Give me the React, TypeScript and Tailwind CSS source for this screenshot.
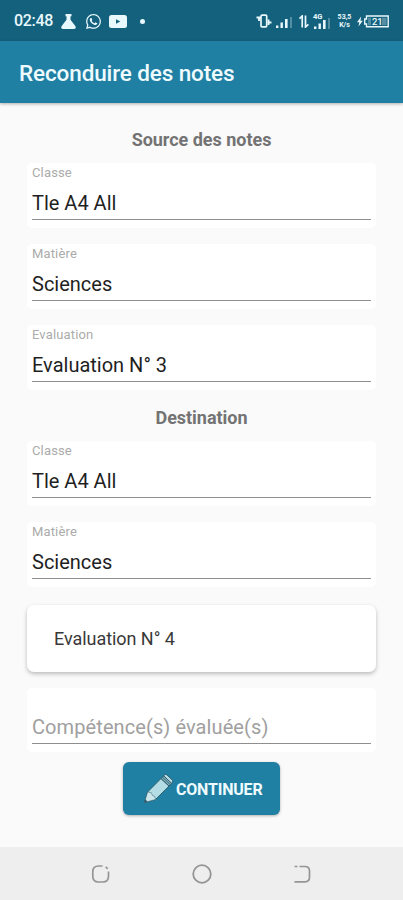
import type { ReactNode } from 'react'
import { FaWhatsapp } from 'react-icons/fa'

const sourceFields = [
  { label: 'Classe', value: 'Tle A4 All' },
  { label: 'Matière', value: 'Sciences' },
  { label: 'Evaluation', value: 'Evaluation N° 3' },
]

const destinationFields = [
  { label: 'Classe', value: 'Tle A4 All' },
  { label: 'Matière', value: 'Sciences' },
]

function FlaskIcon() {
  return (
    <svg width="15" height="15" viewBox="0 0 15 15" fill="currentColor" className="ml-[7px]">
      <path d="M4.500 0h6v2.200h-1v3.600l4.800 6.100c1 1.300.4 3.100-1.200 3.100H1.900C.3 15-.3 13.200.7 11.900l4.800-6.100V2.200h-1z" />
    </svg>
  )
}

function YoutubeIcon() {
  return (
    <svg width="18" height="13" viewBox="0 0 18 13" className="ml-[7px]">
      <rect width="18" height="13" rx="2.500" fill="currentColor" />
      <path d="M7 4.200l4.300 2.300L7 8.800z" fill="#14617d" />
    </svg>
  )
}

function VibrateIcon() {
  return (
    <svg width="16" height="14" viewBox="0 0 16 14" fill="none" stroke="currentColor">
      <rect x="5" y="1.200" width="5.700" height="11.600" rx="1" strokeWidth="1.700" />
      <path d="M.5 3.500h4.500M3 2.500v4.500M12.500 5.500v5.500M11.500 8.500h4" strokeWidth="1.900" />
    </svg>
  )
}

function SignalIcon() {
  return (
    <svg width="17" height="11" viewBox="0 0 17 11" fill="currentColor">
      <rect x="0" y="8.500" width="2.400" height="2.500" />
      <rect x="4.500" y="5.500" width="2.400" height="5.500" />
      <rect x="9" y="2" width="2.600" height="9" />
      <rect x="14" y="0" width="2" height="11" opacity="0.300" />
    </svg>
  )
}

function DataArrowsIcon() {
  return (
    <svg width="10" height="13" viewBox="0 0 10 13" fill="none" stroke="currentColor" strokeWidth="1.700">
      <path d="M.5 3.700L3.200 1v11.500M6.500.5V12l2.900-2.700" />
    </svg>
  )
}

function BatteryIcon() {
  return (
    <svg width="33" height="13" viewBox="0 0 33 13" className="ml-[5px]">
      <path d="M4.200 1.500L0 7.300h2.300L1.500 11.500l4.300-5.800H3.500z" fill="currentColor" />
      <path d="M9.500 1h21.700v10.800H9.500V9H7.700V4h1.800z" fill="none" stroke="currentColor" strokeWidth="1.400" />
      <rect x="11" y="2.700" width="3" height="7.500" fill="currentColor" opacity="0.300" />
      <rect x="25" y="2.700" width="4.500" height="7.500" fill="currentColor" opacity="0.300" />
      <text x="20.300" y="9.800" textAnchor="middle" fontSize="9.500" fontWeight="500" fill="currentColor">21</text>
    </svg>
  )
}

function PencilIcon() {
  return (
    <svg width="31" height="31" viewBox="0 0 31 31" stroke="#2c5868" strokeWidth="0.900" strokeLinejoin="round">
      <path d="M1.500 28.500L4.600 18 18 4.500l8 7.600L12.500 25.500z" fill="#b4dce5" />
      <path d="M4.600 18l3.600.7 1.400 2.900 2.300.9.600 3-11 3z" fill="#cce6eb" strokeWidth=".5" />
      <path d="M18 4.500l2.700-2.700 8 7.600-2.700 2.700z" fill="#7badbb" />
      <path d="M20.700 1.800l.8-.8c.8-.8 1.800-.6 2.500 0l5 4.700c.8.8.9 1.900.2 2.700l-.5 1z" fill="#b4dce5" />
      <path d="M19.400 3.100l8 7.600" fill="none" strokeWidth=".8" />
      <path d="M1.500 28.500l1-3 1.700 2.100z" fill="#2c5868" strokeWidth=".4" />
    </svg>
  )
}

function StatusBar() {
  return (
    <div className="flex h-[41px] items-center bg-[#14617d] pt-px pr-[13px] pl-[14px] text-[#e9f8fc]">
      <span className="w-[40px] text-[16px] font-medium tracking-[-0.3px] whitespace-nowrap">02:48</span>
      <FlaskIcon />
      <FaWhatsapp size={17} className="ml-[9px]" />
      <YoutubeIcon />
      <span className="ml-[13px] h-[5px] w-[5px] rounded-full bg-current" />
      <div className="ml-auto flex items-center">
        <VibrateIcon />
        <span className="mt-[3px] ml-[4px]">
          <SignalIcon />
        </span>
        <span className="ml-[6px]">
          <DataArrowsIcon />
        </span>
        <span className="ml-[4px] flex w-[18px] flex-col">
          <span className="h-[5px] text-[7.5px] leading-[5px] font-bold">4G</span>
          <span className="-mt-[1px] pl-[1px]">
            <SignalIcon />
          </span>
        </span>
        <span className="ml-[6px] flex w-[15px] flex-col text-center text-[7px] leading-[8px] font-bold">
          <span>53,5</span>
          <span>K/s</span>
        </span>
        <BatteryIcon />
      </div>
    </div>
  )
}

function SectionTitle({ children }: { children: ReactNode }) {
  return <h2 className="text-center text-[18px] leading-6 font-bold tracking-[-0.03px] text-[#737373]">{children}</h2>
}

function Field({ label, value }: { label: string; value: string }) {
  return (
    <div className="h-[65px] rounded-[5px] bg-white px-[5px]">
      <div className="flex h-[57px] flex-col border-b border-[#8f8f8f]">
        <span className="pt-[2px] text-[13px] leading-4 tracking-[0.15px] text-[#ababab]">{label}</span>
        <span className="mt-[10px] text-[20px] leading-6 text-[#1f1f1f]">{value}</span>
      </div>
    </div>
  )
}

function NavBar() {
  return (
    <div className="flex h-[53px] items-center justify-center gap-[81px] bg-[#eeeeee] text-[#959595]">
      <svg width="20" height="20" viewBox="0 0 20 20" fill="none" stroke="currentColor" strokeWidth="1.700">
        <path d="M11.500 2H7.500C4 2 1.800 4 1.800 7.500v4.800c0 3.500 2.200 5.700 5.700 5.700h4.300c3.500 0 5.700-2.200 5.700-5.700V7.500" />
        <path d="M14.700 2.800l2 2" />
      </svg>
      <svg width="20" height="20" viewBox="0 0 20 20" fill="none" stroke="currentColor" strokeWidth="1.800">
        <circle cx="10" cy="10" r="8.800" />
      </svg>
      <svg width="20" height="20" viewBox="0 0 20 20" fill="none" stroke="currentColor" strokeWidth="1.700">
        <path d="M1.500 2.500h3M6.500 2.500H12c3 0 4.500 1.600 4.500 4.500v6.300c0 3-1.500 4.500-4.500 4.500H1.500" />
      </svg>
    </div>
  )
}

export default function App() {
  return (
    <div className="flex h-[900px] w-full flex-col bg-[#fafafa] font-[Roboto,sans-serif]">
      <StatusBar />
      <header className="flex h-[62px] items-center bg-[#2080a3] pt-[3px] pl-[19px] shadow-[0_1px_3px_rgba(0,0,0,0.3)]">
        <h1 className="text-[22.5px] font-medium tracking-[-0.12px] whitespace-nowrap text-[#eefbff]">
          Reconduire des notes
        </h1>
      </header>

      <main className="flex flex-1 flex-col px-[27px] pt-[25px]">
        <SectionTitle>Source des notes</SectionTitle>
        <div className="mt-[11px] flex flex-col gap-4">
          {sourceFields.map((field) => (
            <Field key={field.label} {...field} />
          ))}
        </div>

        <div className="mt-[16px]">
          <SectionTitle>Destination</SectionTitle>
        </div>
        <div className="mt-[11px] flex flex-col gap-4">
          {destinationFields.map((field) => (
            <Field key={field.label} {...field} />
          ))}
        </div>

        <div className="mt-[18px] flex h-[67px] items-center rounded-[7px] bg-white px-[27px] text-[18px] tracking-[-0.05px] text-[#383838] shadow-[0_2px_4px_rgba(0,0,0,0.25)]">
          Evaluation N° 4
        </div>

        <div className="mt-[16px] h-[64px] rounded-[5px] bg-white px-[5px]">
          <div className="flex h-[56px] items-end border-b border-[#8f8f8f] pb-[4px] text-[20px] leading-6 tracking-[0.09px] text-[#a0a0a0]">
            Compétence(s) évaluée(s)
          </div>
        </div>

        <button className="mt-[10px] ml-[96px] flex h-[53px] w-[157px] items-center rounded-[6px] bg-[#2080a3] pt-[2px] pl-[20px] text-[#eefbff] shadow-[0_1px_3px_rgba(0,0,0,0.3)]">
          <PencilIcon />
          <span className="ml-[2px] text-[16px] font-bold tracking-[-0.2px] whitespace-nowrap">CONTINUER</span>
        </button>
      </main>

      <NavBar />
    </div>
  )
}
